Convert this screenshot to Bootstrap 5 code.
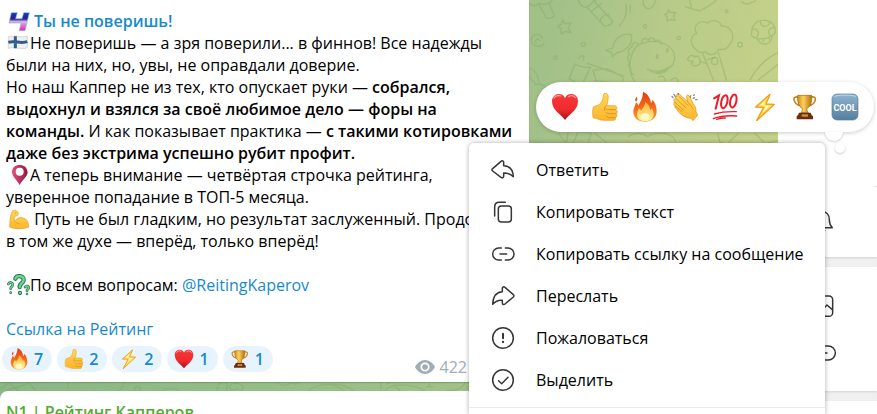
<!DOCTYPE html>
<html lang="ru">
<head>
<meta charset="utf-8">
<meta name="viewport" content="width=device-width, initial-scale=1">
<title>Рейтинг Капперов</title>
<link rel="stylesheet" href="https://cdn.jsdelivr.net/npm/bootstrap@5.3.0/dist/css/bootstrap.min.css">
<style>
  body { font-family: "Open Sans", "Noto Sans", sans-serif; font-size: 16px; line-height: 22px; color: #000; }
  a { color: #168acd; text-decoration: none; }
  strong { font-weight: 600; }
  .chat-pane { background: linear-gradient(100deg, #86b585 0%, #93bd87 35%, #a2c189 66%, #b9cb89 80%, #cad488 100%); }
  .doodles { fill: none; stroke: #7ea35c; stroke-opacity: .36; stroke-width: 4; stroke-linecap: round; stroke-linejoin: round; }
  .bubble { max-width: 529px; background: #fff; box-shadow: 0 1px 1px rgba(70, 110, 60, .35); }
  .post { padding: 10px 0 4px 2px; }
  .post-text { padding: 0 14px 0 4px; }
  .sender { font-weight: 600; }
  .inline-emoji { width: 24px; height: 22px; vertical-align: top; overflow: visible; }
  .inline-emoji.wide { width: 28px; }
  .reactions { gap: 5px; padding-top: 6px; }
  .reaction { height: 26px; padding: 0 9px 0 7px; gap: 5px; background: #e8f4fd; color: #168acd; font-weight: 600; line-height: 22px; }
  .reaction svg { width: 20px; height: 20px; overflow: visible; }
  .views { gap: 5px; margin-left: auto; padding: 10px 62px 0 0; color: #a0acb6; }
  .next-post { margin-top: 9px; padding: 10px 6px; border-top-left-radius: 8px; }
  .next-sender { color: #4fad2d; font-weight: 600; }
  .info-pane { width: 99px; background: #f0f0f0; }
  .info-block { background: #fff; box-shadow: 0 1px 2px rgba(0, 0, 0, .12); margin-bottom: 10px; }
  .info-head { height: 186px; }
  .info-line { height: 1px; margin-left: 96px; background: #e4e4e4; }
  .info-alerts { padding: 23px 0 23px 31px; }
  .info-media { padding: 15px 0 15px 31px; }
  .info-media button { height: 47px; }
  .plain { border: 0; background: none; padding: 0; color: inherit; }
  .outline { fill: none; stroke: #363636; stroke-width: 4.5; stroke-linecap: round; stroke-linejoin: round; }
  .picker { left: 536px; top: 82px; height: 50px; padding: 0 9px; border-radius: 25px; background: #fff; box-shadow: 0 1px 4px rgba(0, 0, 0, .2); }
  .picker button { width: 40px; height: 50px; }
  .picker button svg { width: 28px; height: 28px; overflow: visible; }
  .picker-tail { left: 284px; top: 50px; width: 40px; height: 26px; fill: #fff; filter: drop-shadow(0 1px 1px rgba(0, 0, 0, .2)); }
  .actions { left: 469px; top: 143px; bottom: 0; width: 356px; background: #fff; border-radius: 5px 5px 0 0; box-shadow: 0 0 5px rgba(0, 0, 0, .32); }
  .action-list { padding: 6px 0; border-bottom: 1px solid #eaeaea; }
  .action { height: 42px; padding: 0 21px 0 22px; gap: 21px; }
</style>
<script src="https://cdn.jsdelivr.net/npm/bootstrap@5.3.0/dist/js/bootstrap.bundle.min.js"></script>
</head>
<body class="overflow-hidden bg-white">

<svg class="position-absolute" width="0" height="0" aria-hidden="true">
  <defs>
    <linearGradient id="gHeart" x2="0" y2="1"><stop stop-color="#f7383c"/><stop offset=".6" stop-color="#f02a2c"/><stop offset="1" stop-color="#b00c1c"/></linearGradient>
    <linearGradient id="gSkin" x2="0" y2="1"><stop stop-color="#ffd85c"/><stop offset="1" stop-color="#fdb52a"/></linearGradient>
    <linearGradient id="gFire" x2="0" y2="1"><stop stop-color="#e23a12"/><stop offset=".6" stop-color="#f9701c"/><stop offset="1" stop-color="#fda02c"/></linearGradient>
    <linearGradient id="gFlame" x2="0" y2="1"><stop stop-color="#ffb52e"/><stop offset="1" stop-color="#fff6a8"/></linearGradient>
    <linearGradient id="gGold"><stop stop-color="#d08a18"/><stop offset=".4" stop-color="#fcd158"/><stop offset="1" stop-color="#b9700f"/></linearGradient>
    <linearGradient id="gCool" x2="0" y2="1"><stop stop-color="#8db4d0"/><stop offset="1" stop-color="#557f9e"/></linearGradient>
    <linearGradient id="gFour" x2="0" y2="1"><stop stop-color="#1738c8"/><stop offset=".35" stop-color="#262083"/><stop offset=".5" stop-color="#d9b6ec"/><stop offset="1" stop-color="#e61fb8"/></linearGradient>
    <linearGradient id="gPin"><stop stop-color="#e0527d"/><stop offset="1" stop-color="#9c1642"/></linearGradient>
  </defs>
  <symbol id="e-heart" viewBox="78 280 84 84">
    <path fill="url(#gHeart)" d="M120 361C109 345 81 332 81 305c0-14 10-22 21-22 9 0 15 5 18 12 3-7 9-12 18-12 12 0 21 8 21 22 0 27-28 40-39 56Z"/>
    <path fill="none" stroke="#fff" stroke-opacity=".5" stroke-width="4" stroke-linecap="round" d="M87 295c4-7 14-9 20-6M131 291c6-5 15-4 20 3"/>
  </symbol>
  <symbol id="e-thumb" viewBox="198 279 84 84">
    <path fill="url(#gSkin)" stroke="#e89a1e" stroke-width="2" d="M205 321c5-4 16-4 21-10 5-7 8-13 9-23 0-8 5-10 9-8 7 3 7 12 3 31l-2 6h24c7 0 9 10 3 12 7 2 6 11 1 12 5 3 3 11-2 12 2 6-1 8-7 8h-27c-13 0-22-7-32-7-3-8-3-24 0-33Z"/>
    <path fill="none" stroke="#d98a1c" stroke-width="2.5" stroke-linecap="round" d="M272 329h-20c-6 0-9 0-11-3M273 341h-21c-5 0-8-1-9-4M271 353h-18c-4 0-7-1-8-5M242 318c-4 5-5 9-3 14"/>
  </symbol>
  <symbol id="e-fire" viewBox="316 280 84 84" overflow="visible">
    <path fill="url(#gFire)" d="M359 366c-22 0-36-12-36-30 0-11 6-17 8-28 3 3 6 6 7 10 5-11 14-22 14-42 15 7 22 19 24 34 3-3 4-6 4-10 9 9 13 22 13 35 0 19-14 31-34 31ZM329 305c-2-5 1-10 4-14 3 5 3 10-1 14Z"/>
    <path fill="url(#gFlame)" d="M358 365c-16 0-24-9-24-21 0-8 4-12 6-18 3 2 5 4 6 7 5-8 13-15 12-27 10 6 15 16 16 26 2-1 4-4 4-7 4 6 6 12 6 19 0 13-10 21-26 21Z"/>
    <ellipse cx="358" cy="352" rx="13" ry="11" fill="#fff9c8"/>
  </symbol>
  <symbol id="e-clap" viewBox="438 280 84 84">
    <path fill="url(#gSkin)" stroke="#d98f18" stroke-width="2" d="M455 299c-5-5-11 0-7 6l-1 5c-2 4 0 7 3 8-1 5 1 8 5 10 6 13 24 27 43 28l6 7 14-17-5-9c1-12-3-18-9-26l-10-20c-4-8-11-5-9 3l3 12-24-22c-5-5-12-1-8 6-4 0-6 5-1 9Z"/>
    <path fill="none" stroke="#d98f18" stroke-width="2.5" stroke-linecap="round" d="m455 299 28 26M449 307l27 25M451 319l20 17M488 306c3 6 11 11 15 20M463 291l26 26"/>
    <path fill="none" stroke="#8b8b8b" stroke-width="4" stroke-linecap="round" d="m441 290 3 4M447 284l4 7M460 281v4M497 288l-1 4M506 287l2-2M512 300h4M505 296l3-2"/>
  </symbol>
  <symbol id="e-hundred" viewBox="558 280 84 84">
    <g fill="none" stroke="#ed1c2b" stroke-linecap="round">
      <path stroke-width="6" d="m567 296 15-9-10 40"/>
      <ellipse cx="598" cy="306" rx="9" ry="20" stroke-width="6" transform="rotate(13 598 306)"/>
      <ellipse cx="625" cy="304" rx="9" ry="20" stroke-width="6" transform="rotate(13 625 304)"/>
      <path stroke-width="4" d="M568 343c20-6 42-8 66-7M565 357c20-8 42-10 70-8M575 359c9-3 18-4 26-4"/>
    </g>
  </symbol>
  <symbol id="e-bolt" viewBox="678 280 84 84">
    <path fill="#ffe25a" stroke="#f59d14" stroke-width="4" stroke-linejoin="round" d="m735 284-43 38 24 1-21 40 53-49-25-1Z"/>
    <path fill="#fff8c8" d="m723 300-18 17 18 1-12 22 24-22-20-1Z"/>
  </symbol>
  <symbol id="e-cup" viewBox="282 39 84 84">
    <path fill="none" stroke="#c98618" stroke-width="5" d="M305 52c-8-3-16 0-14 7 2 10 10 17 20 18M341 52c8-3 16 0 14 7-2 10-10 17-20 18"/>
    <path fill="url(#gGold)" stroke="#9c620d" stroke-width="2" d="M302 46h42c1 22-3 34-14 39-1 5 1 9 4 13h-22c3-4 5-8 4-13-11-5-15-17-14-39Z"/>
    <path fill="#6b2d13" d="M306 98h35l3 8 4 2v10h-49v-10l4-2Z"/>
    <path fill="#c9963b" d="M314 103h19v7h-19z"/>
  </symbol>
  <symbol id="e-cool" viewBox="402 39 84 84">
    <rect x="405" y="42" width="78" height="78" rx="15" fill="url(#gCool)" stroke="#557c99" stroke-width="2"/>
    <path fill="none" stroke="#fff" stroke-opacity=".45" stroke-width="3" stroke-linecap="round" d="M413 49c8-5 55-5 63 0"/>
    <text x="444" y="92" text-anchor="middle" fill="#fff" font-family="Roboto, sans-serif" font-weight="700" font-size="27">COOL</text>
  </symbol>
</svg>

<div class="d-flex vh-100 position-relative overflow-hidden">

  <main class="chat-pane flex-grow-1 position-relative overflow-hidden">
    <svg class="doodles position-absolute top-0 start-0 w-100 h-100" aria-hidden="true">
      <g transform="translate(525 0) scale(.3334)">
        <path d="M12 8c8 12 22 12 28 2 12 6 34 4 42-10M42 14l20 37c5 8 26 3 25-8L72 10M160 0c4 14 14 22 26 22l49 53c8 9 28-3 28-12L204 0M188 20l34-28M200 34l30-24M226 62c0-10 14-20 26-18M303 15c4 22-4 46-20 62M315 18v18M355 0c-4 34 32 36 36 0M480 20c14 4 28 10 42 13 26-12 40-20 52-33M494 0l5 22M650 6c6 6 12 5 20 6 8-8 18-2 22-12"/>
        <path d="m113 60 7 11 18-2-9 14 9 15-16-4-13 8-1-16-12-8 13-5ZM430 29l7 9 15-1-7 12 5 12-12-3-11 5v-12l-9-8 11-4ZM52 115c-6-18-32-14-33 5 0 20 30 26 38 8M43 121c-4-8-14-2-10 6"/>
        <circle cx="175" cy="133" r="6"/><circle cx="360" cy="79" r="5"/><circle cx="461" cy="114" r="5"/><circle cx="605" cy="34" r="4"/><circle cx="645" cy="134" r="7"/><circle cx="91" cy="173" r="5"/>
        <path d="M262 145c6-32 32-48 56-41 8 24-14 52-44 54l-12 12-4-14-16-4c6-6 12-7 20-7Z"/>
        <path d="M330 246c-30-40-14-110 28-118 44-12 90 8 91 44 0 28-20 42-60 48M368 208c20 8 44 6 64-8-8 22-40 26-56 12M338 132c-4-10-18-4-18 10-12 2-12 14-7 22-8 6-6 18 0 22-6 8 0 18 5 20-2 10 2 16 8 18M350 128c-2-12 12-18 20-6 4-12 18-10 20 2 8-8 18-2 18 8M400 232c10-10 18 0 22 10M438 240c8-8 20-8 22 4"/>
        <ellipse cx="397" cy="170" rx="3" ry="5"/><ellipse cx="427" cy="151" rx="3" ry="5"/>
        <path d="M513 148c-20-12-18-44 2-48-16-22 14-46 32-30 14-14 38-8 42 8 30-2 44 32 26 54-8 16-18 18-34 16-10 18-30 22-40 6-10 6-22 4-28-6ZM532 158l34 84M580 158l24 82M546 178l22-4M488 176c6-14 20-10 20-4 12-10 20 4 16 20-8 8-22 8-26 0 4-2 6-6 6-10-10 4-18 0-16-6ZM524 184l18 6"/>
        <ellipse cx="569" cy="183" rx="9" ry="11"/>
        <path d="M680 108c-10-62 78-62 70-8-16 16-50 24-70 8ZM697 114c4 26 44 24 44-6M682 88c14-6 24 14 12 22M706 62c-2 22 26 22 28 4M746 84c-14-2-20 14-10 22M715 118v6M733 114v6M676 238c20-36 52-66 84-80M700 240l60-48"/>
        <path d="m150 192-18 44 34 18M150 192c12 8 28 10 46 10l-22 46M160 176c12-16 20-8 14 4M206 210l40-4 46 24c8 16-6 24-24 18l-60-6M204 212l10 32M14 204c-12 30 10 34 18 50 16-8 40 10 42 30M14 204c20 10 26 22 28 42M188 190l108 38"/>
        <path d="m100 400 24 30 6-36M144 430l16-36 40 6-14 32M210 400l40 32M310 410c20-16 46-10 58 0 30-20 82-10 84 18M578 400l6 26 20 8 36-34M690 400l30 30 38-8"/>
      </g>
      <g transform="translate(0 310) scale(.3334)">
        <path d="m0 236 28-18 28 26M20 240l68-20 22 24M205 218v12M282 242c36 14 90 8 88-24M488 244c4-12 42-12 50 0M650 242c4-26 22-32 32-20l-4 22M694 222c-12 16 2 22 20 14M700 220c30 0 36 14 22 22M836 220c10 10 26 8 34-4"/>
        <circle cx="412" cy="238" r="9"/>
      </g>
      <g transform="translate(280 340) scale(.3334)"><path d="M36 128c4 6 20 4 22-2M84 154c30-28 104-30 138 0M150 133c20 4 34 12 42 20M303 126v28M322 132c8-8 20-8 28-5M314 154c16-26 80-26 124 0M340 136l20 16M500 152c30 0 50-10 56-26M440 140h18M448 130v8"/></g>
    </svg>

    <article class="bubble post position-relative">
      <div class="post-text">
        <div class="sender"><svg class="inline-emoji wide" viewBox="20 30 84 66" aria-hidden="true"><path fill="url(#gFour)" stroke="#86b9e4" stroke-width="2" d="m36 38-7 31h36l-5 23h17l13-54H73l-5 18H49l5-18Z"/></svg><a href="#">Ты не поверишь!</a></div>
        <div><svg class="inline-emoji" viewBox="18 99 72 66" aria-hidden="true"><path fill="#f0f0f0" stroke="#c9c9c9" stroke-width="2" d="M25 113c16-6 37 5 57-2v35c-18 7-38-4-57 2Z"/><path fill="none" stroke="#315c91" stroke-width="9" d="M46 112v36M25 130c17-6 38 5 57-2"/></svg>Не поверишь — а зря поверили... в финнов! Все надежды были на них, но, увы, не оправдали доверие.</div>
        <div>Но наш Каппер не из тех, кто опускает руки — <strong>собрался, выдохнул и взялся за своё любимое дело — форы на команды.</strong> И как показывает практика — <strong>с такими котировками даже без экстрима успешно рубит профит.</strong></div>
        <div><svg class="inline-emoji" viewBox="18 12 72 66" aria-hidden="true"><path fill="url(#gPin)" fill-rule="evenodd" d="M58 74C50 58 36 50 36 35c0-12 10-20 23-20s23 8 23 20c0 15-16 23-24 39Zm1-51a12 12 0 1 0 0 24 12 12 0 0 0 0-24Z"/><path fill="none" stroke="#5f1532" stroke-width="2" d="M58 74c8-16 24-24 24-39"/></svg>А теперь внимание — четвёртая строчка рейтинга, уверенное попадание в ТОП-5 месяца.</div>
        <div><svg class="inline-emoji" viewBox="18 147 72 66" aria-hidden="true"><path fill="url(#gSkin)" stroke="#e19a1d" stroke-width="2" d="M36 158c4-6 12-5 14-1 6 2 7 9 1 13-3 2-6 0-8 4-1 5 0 9 2 13 5-9 13-13 21-11 14 2 21 14 20 28-16 7-42 7-57 0 1-18 1-32 7-46Z"/><path fill="none" stroke="#df911b" stroke-width="2" d="M45 187c3 5 8 7 13 7M48 158l-3 7"/></svg> Путь не был гладким, но результат заслуженный. Продолжай в&nbsp;том же духе — вперёд, только вперёд!</div>
        <br>
        <div><svg class="inline-emoji" viewBox="18 341 72 66" aria-hidden="true"><g fill="none" stroke="#2c7550" stroke-linecap="round"><path stroke-width="13" d="M46 355c4-12 27-9 25 5-1 10-13 8-12 20m1 18v0"/><path stroke-width="8" d="M25 371c2-7 14-5 13 3-1 6-6 5-6 11m0 12v0M75 380c3-5 12-3 11 3-1 5-6 4-5 9m0 9v0"/></g><g fill="none" stroke="#66d993" stroke-linecap="round"><path stroke-width="7" d="M46 355c4-12 27-9 25 5-1 10-13 8-12 20m1 18v0"/><path stroke-width="4" d="M25 371c2-7 14-5 13 3-1 6-6 5-6 11m0 12v0M75 380c3-5 12-3 11 3-1 5-6 4-5 9m0 9v0"/></g></svg>По всем вопросам: <a href="#">@ReitingKaperov</a></div>
        <br>
        <div><a href="#">Ссылка на Рейтинг</a></div>
      </div>
      <div class="reactions d-flex align-items-start">
        <button class="reaction btn rounded-pill border-0 d-flex align-items-center"><svg aria-hidden="true"><use href="#e-fire"/></svg>7</button>
        <button class="reaction btn rounded-pill border-0 d-flex align-items-center"><svg aria-hidden="true"><use href="#e-thumb"/></svg>2</button>
        <button class="reaction btn rounded-pill border-0 d-flex align-items-center"><svg aria-hidden="true"><use href="#e-bolt"/></svg>2</button>
        <button class="reaction btn rounded-pill border-0 d-flex align-items-center"><svg aria-hidden="true"><use href="#e-heart"/></svg>1</button>
        <button class="reaction btn rounded-pill border-0 d-flex align-items-center"><svg aria-hidden="true"><use href="#e-cup"/></svg>1</button>
        <div class="views d-flex align-items-center">
          <svg width="20" height="14" viewBox="0 0 20 14" aria-hidden="true"><path fill="#a0acb6" d="M10 0c4 0 8 3 10 7-2 4-6 7-10 7S2 11 0 7c2-4 6-7 10-7Z"/><circle cx="10" cy="7" r="3.7" fill="#a0acb6" stroke="#fff" stroke-width="1.8"/></svg>
          <span>422</span>
        </div>
      </div>
    </article>

    <article class="bubble next-post position-relative">
      <a class="next-sender" href="#">N1 | Рейтинг Капперов</a>
    </article>
  </main>

  <aside class="info-pane flex-shrink-0">
    <section class="info-block">
      <div class="info-head"></div>
      <div class="info-line"></div>
      <div class="info-alerts">
        <button class="plain d-flex" aria-label="Уведомления"><svg class="outline" width="28" height="24" viewBox="118 244 84 72"><path d="M115 297h73c-7-7-9-11-9-24 0-15-9-24-21-24h-13c-12 0-21 9-21 24 0 13-2 17-9 24ZM138 306c4 7 22 7 27 0"/></svg></button>
      </div>
    </section>
    <section class="info-block info-media">
      <button class="plain d-flex align-items-center" aria-label="Фотографии"><svg class="outline" width="28" height="24" viewBox="118 491 84 72"><rect x="127" y="497" width="62" height="61" rx="11"/><path d="m128 546 18-18 12 10 14-14 16 14"/></svg></button>
      <button class="plain d-flex align-items-center" aria-label="Ссылки"><svg class="outline" width="28" height="24" viewBox="118 633 84 72"><path d="M157 648h-10a21 21 0 0 0 0 42h10M166 648h10a21 21 0 0 1 0 42h-10M151 669h21"/></svg></button>
    </section>
    <section class="info-block h-100"></section>
  </aside>

  <div class="picker position-absolute d-flex">
    <svg class="picker-tail position-absolute" aria-hidden="true"><path d="M5 0a9 9 0 0 0 18 0Z"/><circle cx="20" cy="16" r="5"/></svg>
    <button class="plain" aria-label="Сердце"><svg><use href="#e-heart"/></svg></button>
    <button class="plain" aria-label="Палец вверх"><svg><use href="#e-thumb"/></svg></button>
    <button class="plain" aria-label="Огонь"><svg><use href="#e-fire"/></svg></button>
    <button class="plain" aria-label="Аплодисменты"><svg><use href="#e-clap"/></svg></button>
    <button class="plain" aria-label="Сто"><svg><use href="#e-hundred"/></svg></button>
    <button class="plain" aria-label="Молния"><svg><use href="#e-bolt"/></svg></button>
    <button class="plain" aria-label="Кубок"><svg><use href="#e-cup"/></svg></button>
    <button class="plain" aria-label="Круто"><svg><use href="#e-cool"/></svg></button>
  </div>

  <nav class="actions position-absolute" aria-label="Действия с сообщением">
    <div class="action-list">
      <button class="action plain w-100 d-flex align-items-center"><svg class="outline" width="24" height="24" viewBox="93 52 72 72"><path d="m98 84 25-22c3-3 8-1 8 3v10c19 1 28 14 29 33-8-8-17-11-29-11v10c0 5-5 6-8 3L98 91c-3-3-3-5 0-7Z"/></svg>Ответить</button>
      <button class="action plain w-100 d-flex align-items-center"><svg class="outline" width="24" height="24" viewBox="93 179 72 72"><rect x="115" y="197" width="39" height="48" rx="9"/><path d="M104 227v-27c0-9 5-14 14-14h18"/></svg>Копировать текст</button>
      <button class="action plain w-100 d-flex align-items-center"><svg class="outline" width="24" height="24" viewBox="93 305 72 72"><path d="M124 323h-8a18 18 0 0 0 0 36h8M136 323h8a18 18 0 0 1 0 36h-8M120 341h20"/></svg>Копировать ссылку на сообщение</button>
      <button class="action plain w-100 d-flex align-items-center"><svg class="outline" width="24" height="24" viewBox="93 39 72 72"><path d="m160 71-25-22c-3-3-8-1-8 3v10c-19 1-28 14-29 38 8-9 17-13 29-12v8c0 5 5 6 8 3l25-21c3-3 3-4 0-7Z"/></svg>Переслать</button>
      <button class="action plain w-100 d-flex align-items-center"><svg class="outline" width="24" height="24" viewBox="93 168 72 72"><circle cx="129" cy="204" r="31"/><path stroke-width="6" d="M129 191v14"/><path stroke-width="7" d="M129 216v0"/></svg>Пожаловаться</button>
      <button class="action plain w-100 d-flex align-items-center"><svg class="outline" width="24" height="24" viewBox="93 294 72 72"><circle cx="129" cy="330" r="31"/><path d="m116 332 9 9 19-19"/></svg>Выделить</button>
    </div>
  </nav>
</div>
</body>
</html>
